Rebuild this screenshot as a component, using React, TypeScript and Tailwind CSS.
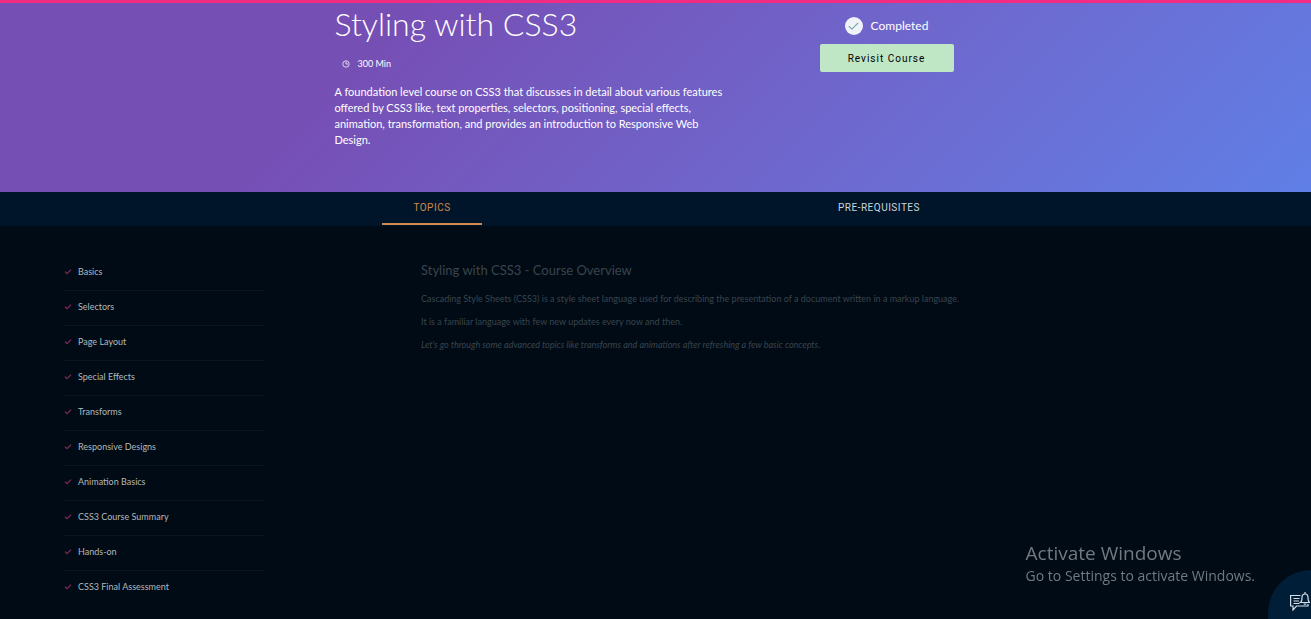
import { Check } from "lucide-react";

const topics: string[] = [
  "Basics",
  "Selectors",
  "Page Layout",
  "Special Effects",
  "Transforms",
  "Responsive Designs",
  "Animation Basics",
  "CSS3 Course Summary",
  "Hands-on",
  "CSS3 Final Assessment",
];

function CourseHeader() {
  return (
    <header className="h-48 border-t-3 border-[#f32c83] bg-linear-135 from-[#764fb5] from-28% to-[#5f7fe6] text-white">
      <div className="mx-auto flex max-w-[642px] items-start justify-between pt-[3px]">
        <div className="w-[400px]">
          <h1 className="text-[32px] leading-9 font-light">Styling with CSS3</h1>
          <div className="mt-4 flex items-center gap-2 pl-[7px] text-[9px] leading-3">
            <svg className="size-2 opacity-75" viewBox="0 0 8 8" fill="none" stroke="currentColor" aria-hidden="true">
              <circle cx="4" cy="4" r="3.2" />
              <path d="M4 1.5V4h2" />
            </svg>
            <span>300 Min</span>
          </div>
          <p className="mt-3.5 text-[11px] leading-4">
            A foundation level course on CSS3 that discusses in detail about various features offered by CSS3 like, text
            properties, selectors, positioning, special effects, animation, transformation, and provides an introduction
            to Responsive Web Design.
          </p>
        </div>
        <div className="mr-[23px] flex w-[134px] flex-col items-center gap-[9px] pt-[11px]">
          <div className="flex items-center gap-2">
            <span className="flex size-[18px] items-center justify-center rounded-full bg-[#f0f4fa] text-[#7ba9a5]">
              <Check size={13} strokeWidth={2} />
            </span>
            <span className="text-[12px] leading-4">Completed</span>
          </div>
          <button
            type="button"
            className="h-7 w-full rounded-xs bg-[#bfe6c5] font-['Roboto',sans-serif] text-[10px] tracking-widest text-black"
          >
            Revisit Course
          </button>
        </div>
      </div>
    </header>
  );
}

function CourseTabs() {
  return (
    <nav className="bg-[#001529] pb-px font-['Roboto',sans-serif]">
      <div className="mx-auto grid max-w-[894px] grid-cols-2 justify-items-center text-[10px]">
        <button type="button" className="h-[33px] w-[100px] border-b-2 border-[#d38a4c] tracking-wider text-[#d38a4c]">
          TOPICS
        </button>
        <button type="button" className="h-[33px] w-[100px] border-b-2 border-transparent tracking-wider text-[#cbd5dc]">
          PRE-REQUISITES
        </button>
      </div>
    </nav>
  );
}

export default function App() {
  return (
    <div className="min-h-screen bg-[#000b15] font-['Lato',sans-serif]">
      <CourseHeader />
      <CourseTabs />
      <main className="flex items-start px-16 pt-[30px] pb-3">
        <ul className="w-[200px] shrink-0">
          {topics.map((topic) => (
            <li key={topic} className="border-b border-[#0d141a] last:border-transparent">
              <a href="#topic" className="flex h-[34px] items-center gap-1.5 pb-0.5 text-[9px] text-[#b3b8bc]">
                <Check className="text-[#74254f]" size={8} strokeWidth={4} />
                {topic}
              </a>
            </li>
          ))}
        </ul>
        <article className="ml-[157px] pt-1.5 text-[9px] leading-[13px] text-[#3a444d]">
          <h2 className="text-[13px] leading-4">Styling with CSS3 - Course Overview</h2>
          <p className="mt-3.5">
            Cascading Style Sheets (CSS3) is a style sheet language used for describing the presentation of a document
            written in a markup language.
          </p>
          <p className="mt-2.5">It is a familiar language with few new updates every now and then.</p>
          <p className="mt-2.5 italic">
            Let's go through some advanced topics like transforms and animations after refreshing a few basic concepts.
          </p>
        </article>
      </main>
      <aside className="pointer-events-none fixed right-14 bottom-[34px] font-['Open_Sans','Noto_Sans',sans-serif] text-[#727980]">
        <p className="text-[19px] leading-7">Activate Windows</p>
        <p className="text-[14px] leading-[18px]">Go to Settings to activate Windows.</p>
      </aside>
      <button
        type="button"
        aria-label="Messages and notifications"
        className="fixed right-0 bottom-0 flex h-[49px] w-[43px] items-end justify-end overflow-hidden rounded-tl-full bg-[#001e38] pr-px pb-2 text-[#d5dde4]"
      >
        <svg className="h-5 w-5" viewBox="0 0 20 20" fill="none" stroke="currentColor" strokeWidth="1.2" aria-hidden="true">
          <path d="M10.500 4.500H.6v10.500h2.400v4l3.500-4H18v-2M3.500 7.500h6M3.500 10h5.500M3.500 12.500h6" />
          <path d="M10.500 11.500c1.500-1 1.500-2.500 1.500-5 0-2 1-3.500 3-3.500s3 1.500 3 3.500c0 2.500 0 4 1.500 5z" />
          <path d="M15 1v2M14 12.500c0 1 2 1 2 0" />
        </svg>
      </button>
    </div>
  );
}
